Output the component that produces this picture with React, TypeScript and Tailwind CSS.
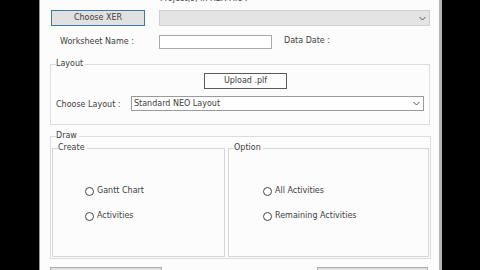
import React from 'react';

const font = { fontFamily: '"DejaVu Sans", "Liberation Sans", sans-serif' };

function Chevron() {
  return (
    <svg width="7" height="5" viewBox="0 0 7 5" className="mr-[3px]">
      <path d="M0.5 1 L3.5 4 L6.5 1" fill="none" stroke="#555" strokeWidth="1" />
    </svg>
  );
}

function Radio({ label }: { label: string }) {
  return (
    <div className="flex h-[10px] items-center gap-[3px]">
      <span className="h-[9px] w-[9px] rounded-full border border-[#444] bg-white" />
      <span className="leading-none">{label}</span>
    </div>
  );
}

function GroupLabel({ children }: { children: React.ReactNode }) {
  return (
    <span className="absolute -top-[6px] left-[5px] bg-[#fcfcfc] pr-[2px] leading-[10px]">{children}</span>
  );
}

export default function App() {
  return (
    <div className="flex h-[270px] w-[480px] overflow-hidden bg-black text-[8px] text-[#404040]" style={font}>
      <div className="w-[39px] shrink-0" />
      <div className="flex w-[403px] shrink-0 flex-col overflow-hidden border-l border-r-[3px] border-l-[#9a9a9a] border-r-[#b5b5b5] bg-[#fcfcfc]">
        {/* clipped project label */}
        <div className="h-[10px] shrink-0 pl-[120px]">
          <span className="-mt-[6px] block leading-[10px]">Project(s) in XER File :</span>
        </div>

        {/* row 1 */}
        <div className="flex h-[16px] shrink-0">
          <button className="ml-[11px] h-[16px] w-[94px] border border-[#3b79a8] bg-[#e1e1e1] leading-none">Choose XER</button>
          <div className="ml-[14px] flex h-[16px] w-[271px] items-center justify-end border border-[#cfcfcf] bg-[#e4e4e4]">
            <Chevron />
          </div>
        </div>

        {/* row 2 */}
        <div className="mt-[9px] flex h-[14px] shrink-0 items-center">
          <span className="ml-[20px] w-[99px]">Worksheet Name :</span>
          <div className="h-[14px] w-[113px] border border-[#a8a8a8] bg-white" />
          <span className="ml-[12px] -mt-[2px]">Data Date :</span>
        </div>

        {/* Layout group */}
        <div className="relative ml-[10px] mt-[15px] h-[61px] w-[380px] shrink-0 border border-[#dcdcdc]">
          <GroupLabel>Layout</GroupLabel>
          <div className="flex pl-[153px] pt-[8px]">
            <button className="h-[16px] w-[83px] border border-[#5a5a5a] bg-[#fdfdfd] leading-none">Upload .plf</button>
          </div>
          <div className="mt-[7px] flex h-[15px] items-center">
            <span className="ml-[5px] w-[75px] pt-[2px]">Choose Layout :</span>
            <div className="flex h-[15px] w-[293px] items-center justify-between border border-[#9a9a9a] bg-white pl-[2px]">
              <span className="leading-none">Standard NEO Layout</span>
              <Chevron />
            </div>
          </div>
        </div>

        {/* Draw group */}
        <div className="relative ml-[10px] mt-[11px] h-[123px] w-[381px] shrink-0 border border-[#dcdcdc]">
          <GroupLabel>Draw</GroupLabel>
          <div className="flex pl-[1px] pt-[11px]">
            <div className="relative h-[109px] w-[173px] border border-[#d6d6d6]">
              <GroupLabel>Create</GroupLabel>
              <div className="flex flex-col gap-[15px] pl-[32px] pt-[37px]">
                <Radio label="Gantt Chart" />
                <Radio label="Activities" />
              </div>
            </div>
            <div className="relative ml-[3px] h-[109px] w-[201px] border border-[#d6d6d6]">
              <GroupLabel>Option</GroupLabel>
              <div className="flex flex-col gap-[15px] pl-[34px] pt-[37px]">
                <Radio label="All Activities" />
                <Radio label="Remaining Activities" />
              </div>
            </div>
          </div>
        </div>

        {/* bottom buttons */}
        <div className="mt-[8px] flex shrink-0">
          <div className="ml-[10px] h-[16px] w-[112px] border border-[#adadad] bg-[#e1e1e1]" />
          <div className="ml-[155px] h-[16px] w-[111px] border border-[#adadad] bg-[#e1e1e1]" />
        </div>
      </div>
      <div className="flex-1" />
    </div>
  );
}
